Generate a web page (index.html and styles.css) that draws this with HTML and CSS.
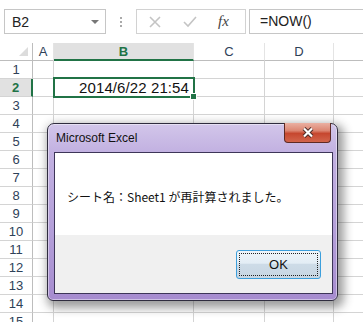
FILE: index.html
```html
<!DOCTYPE html>
<html lang="ja">
<head>
  <meta charset="UTF-8">
  <title>Excel – 再計算</title>
  <link rel="stylesheet" href="styles.css">
</head>
<body>
  <div class="formula-bar">
    <div class="name-box">
      <span>B2</span>
      <span class="arrow"></span>
    </div>
    <div class="grip"><i></i><i></i><i></i></div>
    <div class="fx-buttons">
      <!-- cancel / enter / insert function -->
      <svg class="tool" viewBox="0 0 12 12" width="12" height="12">
        <path d="M1 1 L11 11 M11 1 L1 11" stroke="#c4c4c4" stroke-width="1.6" fill="none"/>
      </svg>
      <svg class="tool" viewBox="0 0 14 12" width="14" height="12">
        <path d="M1 6 L5 10 L13 1" stroke="#c4c4c4" stroke-width="1.6" fill="none"/>
      </svg>
      <span class="fx">fx</span>
    </div>
    <div class="formula">=NOW()</div>
  </div>

  <div class="sheet">
    <div class="row head">
      <div class="rh corner">
        <svg viewBox="0 0 9 9" width="9" height="9"><path d="M9 0 L9 9 L0 9 Z" fill="#dcdcdc"/></svg>
      </div>
      <div class="c a">A</div>
      <div class="c b sel">B</div>
      <div class="c cc">C</div>
      <div class="c d">D</div>
      <div class="c e"></div>
    </div>
    <div class="row"><div class="rh">1</div><div class="c a"></div><div class="c b"></div><div class="c cc"></div><div class="c d"></div><div class="c e"></div></div>
    <div class="row"><div class="rh sel">2</div><div class="c a"></div><div class="c b active">2014/6/22 21:54<span class="handle"></span></div><div class="c cc"></div><div class="c d"></div><div class="c e"></div></div>
    <div class="row"><div class="rh">3</div><div class="c a"></div><div class="c b"></div><div class="c cc"></div><div class="c d"></div><div class="c e"></div></div>
    <div class="row"><div class="rh">4</div><div class="c a"></div><div class="c b"></div><div class="c cc"></div><div class="c d"></div><div class="c e"></div></div>
    <div class="row"><div class="rh">5</div><div class="c a"></div><div class="c b"></div><div class="c cc"></div><div class="c d"></div><div class="c e"></div></div>
    <div class="row"><div class="rh">6</div><div class="c a"></div><div class="c b"></div><div class="c cc"></div><div class="c d"></div><div class="c e"></div></div>
    <div class="row"><div class="rh">7</div><div class="c a"></div><div class="c b"></div><div class="c cc"></div><div class="c d"></div><div class="c e"></div></div>
    <div class="row"><div class="rh">8</div><div class="c a"></div><div class="c b"></div><div class="c cc"></div><div class="c d"></div><div class="c e"></div></div>
    <div class="row"><div class="rh">9</div><div class="c a"></div><div class="c b"></div><div class="c cc"></div><div class="c d"></div><div class="c e"></div></div>
    <div class="row"><div class="rh">10</div><div class="c a"></div><div class="c b"></div><div class="c cc"></div><div class="c d"></div><div class="c e"></div></div>
    <div class="row"><div class="rh">11</div><div class="c a"></div><div class="c b"></div><div class="c cc"></div><div class="c d"></div><div class="c e"></div></div>
    <div class="row"><div class="rh">12</div><div class="c a"></div><div class="c b"></div><div class="c cc"></div><div class="c d"></div><div class="c e"></div></div>
    <div class="row"><div class="rh">13</div><div class="c a"></div><div class="c b"></div><div class="c cc"></div><div class="c d"></div><div class="c e"></div></div>
    <div class="row"><div class="rh">14</div><div class="c a"></div><div class="c b"></div><div class="c cc"></div><div class="c d"></div><div class="c e"></div></div>
    <div class="row"><div class="rh">15</div><div class="c a"></div><div class="c b"></div><div class="c cc"></div><div class="c d"></div><div class="c e"></div></div>
  </div>

  <!-- message box on top of the sheet -->
  <div class="dialog">
    <div class="titlebar">
      <span class="title">Microsoft Excel</span>
      <div class="close">
        <svg viewBox="0 0 12 11" width="12" height="11">
          <path d="M2 1.5 L10 9.5 M10 1.5 L2 9.5" stroke="#4a2a26" stroke-width="4" fill="none"/>
          <path d="M2 1.5 L10 9.5 M10 1.5 L2 9.5" stroke="#fff" stroke-width="2.2" fill="none"/>
        </svg>
      </div>
    </div>
    <div class="client">
      <div class="message">シート名：Sheet1 が再計算されました。</div>
      <div class="buttons">
        <button class="ok"><span>OK</span></button>
      </div>
    </div>
  </div>
</body>
</html>
```

FILE: styles.css
```css
body {
  margin: 0;
  width: 363px;
  height: 322px;
  overflow: hidden;
  position: relative;
  background-color: #fff;
  font-family: "Liberation Sans", Arial, sans-serif;
}

/* formula bar */
.formula-bar {
  height: 43px;
  box-sizing: border-box;
  padding-top: 9px;
  display: flex;
  align-items: flex-start;
}
.name-box {
  margin-left: 4px;
  width: 102px;
  height: 25px;
  box-sizing: border-box;
  border: 1px solid #c6c6c6;
  display: flex;
  align-items: center;
  justify-content: space-between;
  padding: 0 6px 0 7px;
  font-size: 14px;
  color: #222;
}
.arrow {
  width: 0;
  height: 0;
  border-left: 4px solid transparent;
  border-right: 4px solid transparent;
  border-top: 4px solid #777;
}
.grip {
  width: 30px;
  height: 25px;
  display: flex;
  flex-direction: column;
  align-items: center;
  justify-content: center;
  gap: 2px;
}
.grip i {
  width: 2px;
  height: 2px;
  background-color: #aaa;
}
.fx-buttons {
  width: 110px;
  height: 25px;
  box-sizing: border-box;
  border: 1px solid #d2d2d2;
  display: flex;
  align-items: center;
  padding-left: 12px;
  gap: 22px;
}
.fx {
  font-family: "Liberation Serif", serif;
  font-style: italic;
  font-size: 15px;
  color: #444;
  margin-left: -1px;
}
.formula {
  margin-left: 3px;
  flex: 1;
  height: 25px;
  box-sizing: border-box;
  border: 1px solid #c6c6c6;
  border-right: none;
  padding-left: 10px;
  line-height: 23px;
  font-size: 14px;
  color: #222;
}

/* worksheet grid */
.row {
  display: flex;
  height: 18px;
}
.rh, .c {
  box-sizing: border-box;
  height: 18px;
  border-right: 1px solid #d4d4d4;
  border-bottom: 1px solid #d4d4d4;
}
.rh {
  width: 33px;
  text-align: center;
  font-size: 13px;
  line-height: 18px;
  color: #2e4158;
  border-right-color: #bdbdbd;
}
.a { width: 21px; }
.b { width: 140px; }
.cc { width: 71px; }
.d { width: 69px; }
.e { flex: 1; border-right: none; }

.head .c, .head .rh {
  text-align: center;
  font-size: 13px;
  line-height: 17px;
  color: #2e4158;
  border-bottom-color: #bdbdbd;
}
.head .c {
  border-right-color: #e4e4e4;
}
.corner {
  display: flex;
  align-items: flex-end;
  justify-content: flex-end;
  padding: 0 4px 4px 0;
}
.head .sel {
  background-color: #e1e1e1;
  color: #217346;
  font-weight: bold;
  border-bottom: 2px solid #217346;
}
.rh.sel {
  background-color: #e1e1e1;
  color: #217346;
  font-weight: bold;
  border-right: 2px solid #217346;
}
.active {
  position: relative;
  text-align: right;
  padding-right: 4px;
  font-size: 15px;
  line-height: 18px;
  letter-spacing: 0.1px;
  color: #111;
}
.active::before {
  content: "";
  position: absolute;
  top: -2px;
  left: -1px;
  right: -2px;
  bottom: -2px;
  border: 2px solid #217346;
}
.handle {
  position: absolute;
  right: -4px;
  bottom: -4px;
  width: 5px;
  height: 5px;
  background-color: #217346;
  border: 1px solid #fff;
}

/* message box */
.dialog {
  position: absolute;
  left: 47px;
  top: 123px;
  width: 291px;
  height: 178px;
  box-sizing: border-box;
  border: 1px solid #2f2c3e;
  border-radius: 7px 7px 6px 6px;
  background: linear-gradient(#d2c6ea 0, #c2b1e1 28px, #b49fd9 60%, #a68ccf 100%);
  box-shadow: 3px 4px 10px 3px rgba(40,40,40,0.45), inset 0 0 0 1px rgba(255,255,255,0.45);
  display: flex;
  flex-direction: column;
  padding: 0 4px 6px 6px;
}
.titlebar {
  height: 28px;
  display: flex;
  justify-content: space-between;
  align-items: flex-start;
}
.title {
  margin: 7px 0 0 2px;
  font-size: 12px;
  color: #111;
}
.close {
  margin: -1px 2px 0 0;
  width: 47px;
  height: 20px;
  box-sizing: border-box;
  border: 1px solid #5e2a24;
  border-top: none;
  border-radius: 0 0 4px 4px;
  background: linear-gradient(#eab0a2 0, #dc8672 40%, #c6472f 55%, #d2654c 100%);
  display: flex;
  align-items: center;
  justify-content: center;
}
.client {
  flex: 1;
  border: 1px solid #3d3558;
  display: flex;
  flex-direction: column;
}
.message {
  height: 82px;
  background-color: #fff;
  display: flex;
  align-items: center;
  padding: 4px 0 0 12px;
  box-sizing: border-box;
  font-family: "Noto Sans CJK JP", "Liberation Sans", sans-serif;
  font-size: 12px;
  color: #111;
}
.buttons {
  flex: 1;
  background-color: #f0f0f0;
  display: flex;
  justify-content: flex-end;
  align-items: flex-start;
  padding: 15px 11px 0 0;
}
.ok {
  width: 85px;
  height: 29px;
  padding: 2px;
  border: 1px solid #3c9fdc;
  border-radius: 3px;
  background: linear-gradient(#eef5fa 0, #e3edf5 45%, #cddbe7 50%, #c7d6e3 100%);
  font-family: "Liberation Sans", Arial, sans-serif;
  font-size: 13px;
  color: #111;
}
.ok span {
  display: block;
  height: 100%;
  box-sizing: border-box;
  border: 1px dotted #222;
  line-height: 21px;
}
```
